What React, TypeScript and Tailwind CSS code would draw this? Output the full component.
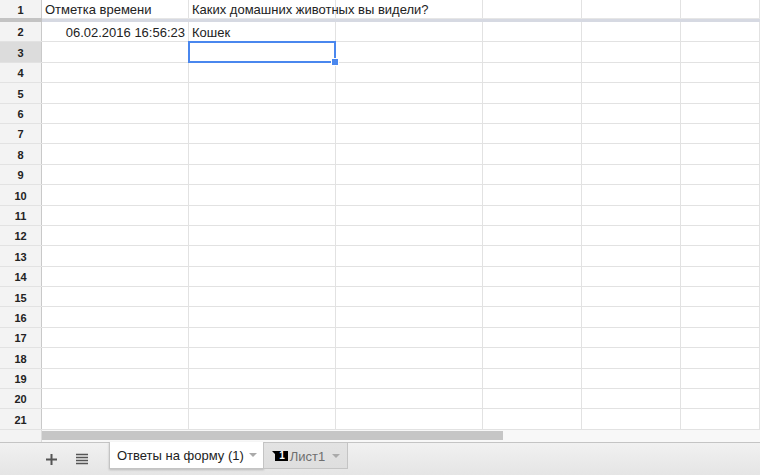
const cols = [
  "w-[147px]",
  "w-[147px]",
  "w-[147px]",
  "w-[99px]",
  "w-[99px]",
  "flex-1",
];

const rows = Array.from({ length: 20 }, (_, i) => i + 2);

function Cell({ w, children, right, selected }: { w: string; children?: React.ReactNode; right?: boolean; selected?: boolean }) {
  return (
    <div
      className={`${w} relative h-full shrink-0 border-r border-[#e2e2e2] flex items-center pt-[2px] px-[3px] text-[13px] text-[#222] whitespace-nowrap overflow-visible ${right ? "justify-end" : ""}`}
    >
      {children}
      {selected && (
        <>
          <div className="absolute -left-px -top-px -right-px -bottom-px border-2 border-[#4a87ee]" />
          <div className="absolute z-10 -right-[4px] -bottom-[4px] w-[8px] h-[8px] bg-[#4a87ee] border border-white" />
        </>
      )}
    </div>
  );
}

function RowHead({ n, active }: { n: number; active?: boolean }) {
  return (
    <div
      className={`w-[42px] shrink-0 h-full flex items-center justify-center pt-[2px] border-r border-[#c9c9c9] text-[11px] font-bold text-[#222] ${active ? "bg-[#dcdcdc]" : "bg-[#f3f3f3]"}`}
    >
      {n}
    </div>
  );
}

export default function App() {
  return (
    <div className="w-[760px] h-[475px] overflow-hidden flex flex-col bg-white font-['Liberation_Sans',Arial,sans-serif]">
      {/* row 1 (frozen) */}
      <div className="flex h-[18px] shrink-0">
        <RowHead n={1} />
        {cols.map((w, i) => (
          <Cell key={i} w={w}>
            {i === 0 && "Отметка времени"}
            {i === 1 && "Каких домашних животных вы видели?"}
          </Cell>
        ))}
      </div>

      {/* freeze bar */}
      <div className="flex h-[4px] shrink-0">
        <div className="w-[42px] bg-[#c3c3c3]" />
        <div className="flex-1 border-t border-[#e6e6e6] bg-[#d6d9e2]" />
      </div>

      {/* body rows */}
      {rows.map((n) => (
        <div key={n} className="flex h-[20.4px] shrink-0 border-b border-[#e2e2e2]">
          <RowHead n={n} active={n === 3} />
          {cols.map((w, i) => (
            <Cell key={i} w={w} right={n === 2 && i === 0} selected={n === 3 && i === 1}>
              {n === 2 && i === 0 && "06.02.2016 16:56:23"}
              {n === 2 && i === 1 && "Кошек"}
            </Cell>
          ))}
        </div>
      ))}

      {/* horizontal scrollbar */}
      <div className="flex h-[12px] shrink-0">
        <div className="w-[42px] bg-[#f3f3f3] border-r border-[#dcdcdc]" />
        <div className="flex-1 bg-[#f8f8f8] flex items-center">
          <div className="w-[461px] h-[9px] bg-[#c6c6c6]" />
        </div>
      </div>

      {/* sheet tabs bar */}
      <div className="flex-1 flex items-start border-t border-[#c4c4c4] bg-gradient-to-b from-[#f1f1f1] to-[#e5e5e5]">
        <div className="flex items-center h-[31px] pl-[45px] gap-[17px] mt-[1px]">
          <svg width="13" height="13" viewBox="0 0 13 13">
            <path d="M6.5 1v11M1 6.5h11" stroke="#555" strokeWidth="2" />
          </svg>
          <svg width="14" height="12" viewBox="0 0 14 12">
            <path d="M1 1.5h12M1 4.5h12M1 7.5h12M1 10.5h12" stroke="#555" strokeWidth="1.3" />
          </svg>
        </div>
        <div className="ml-[20px] -mt-px h-[27px] flex items-center pt-[2px] bg-white border border-t-0 border-[#c4c4c4] pl-[7px] pr-[6px] shadow-[0_1px_2px_rgba(0,0,0,0.2)]">
          <span className="text-[13px] text-[#222]">Ответы на форму (1)</span>
          <svg className="ml-[5px]" width="8" height="5" viewBox="0 0 8 5">
            <path d="M0 0h8L4 4z" fill="#aaa" />
          </svg>
        </div>
        <div className="h-[26px] flex items-center pt-[2px] border border-t-0 border-l-0 border-[#c4c4c4] bg-gradient-to-b from-[#e3e3e3] to-[#dedede] pl-[8px] pr-[7px]">
          <div className="relative w-[16px] h-[10px] flex items-center justify-end pr-[3px]">
            <svg className="absolute inset-0" width="16" height="10" viewBox="0 0 16 10">
              <path d="M0 0h16v10H3V3z" fill="#000" />
            </svg>
            <span className="relative text-[10px] font-bold text-white leading-none">1</span>
          </div>
          <span className="ml-[2px] text-[13px] text-[#6f6f6f]">Лист1</span>
          <svg className="ml-[7px]" width="8" height="5" viewBox="0 0 8 5">
            <path d="M0 0h8L4 4z" fill="#aaa" />
          </svg>
        </div>
      </div>
    </div>
  );
}
